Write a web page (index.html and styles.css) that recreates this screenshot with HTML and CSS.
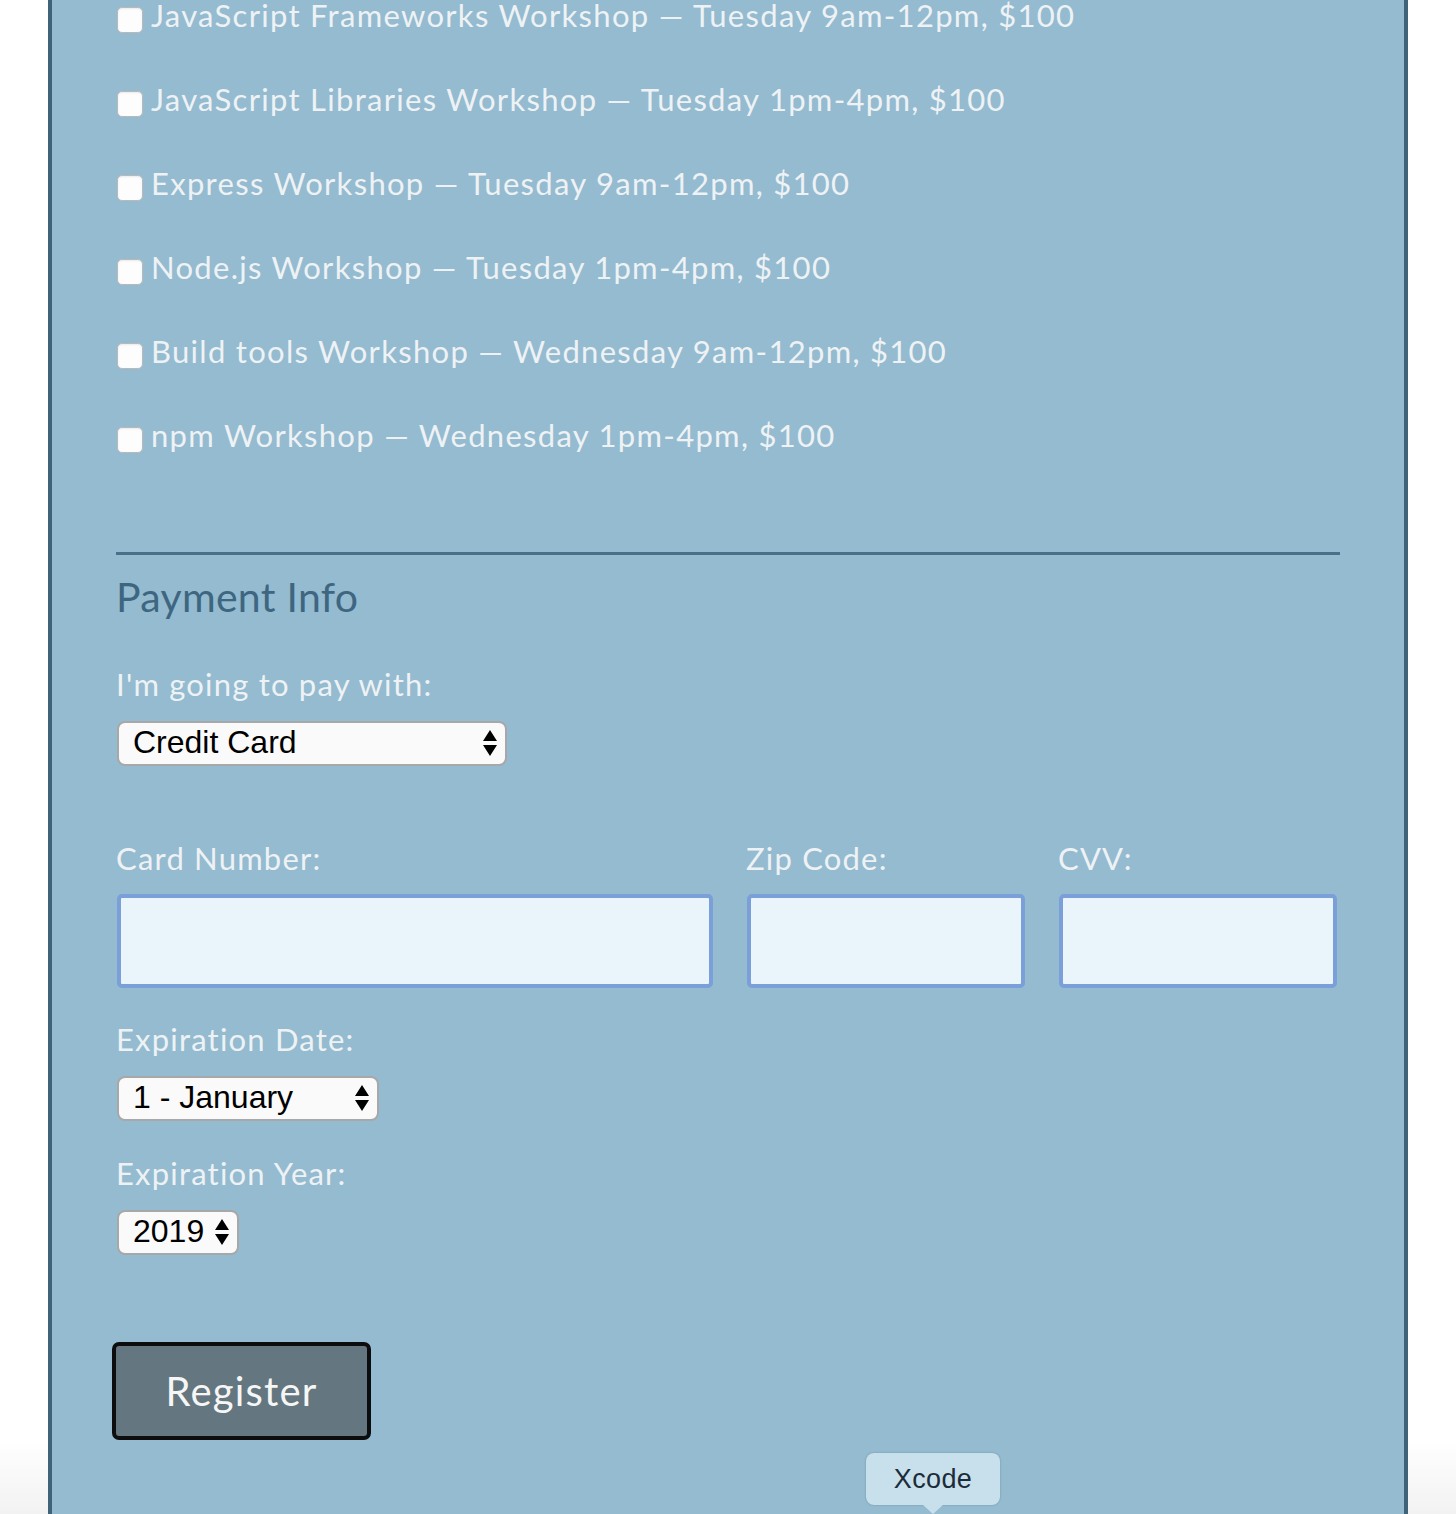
FILE: index.html
```html
<!DOCTYPE html>
<html lang="en">
<head>
<meta charset="utf-8">
<title>Registration</title>
<link rel="stylesheet" href="styles.css">
</head>
<body>
<div class="page">
  <fieldset class="activities">
    <label class="activity"><input type="checkbox" class="check"><span>JavaScript Frameworks Workshop — Tuesday 9am-12pm, $100</span></label>
    <label class="activity"><input type="checkbox" class="check"><span>JavaScript Libraries Workshop — Tuesday 1pm-4pm, $100</span></label>
    <label class="activity"><input type="checkbox" class="check"><span>Express Workshop — Tuesday 9am-12pm, $100</span></label>
    <label class="activity"><input type="checkbox" class="check"><span>Node.js Workshop — Tuesday 1pm-4pm, $100</span></label>
    <label class="activity"><input type="checkbox" class="check"><span>Build tools Workshop — Wednesday 9am-12pm, $100</span></label>
    <label class="activity"><input type="checkbox" class="check"><span>npm Workshop — Wednesday 1pm-4pm, $100</span></label>
  </fieldset>

  <fieldset class="payment">
    <h2 class="legend">Payment Info</h2>

    <label class="field-label pay-label" for="payment">I'm going to pay with:</label>
    <div class="select-wrap select-pay">
      <select id="payment" class="select"><option>Credit Card</option></select>
      <svg class="arrows" width="14" height="28" viewBox="0 0 14 28"><path d="M7 1 L14 12 L0 12 Z M0 16 L14 16 L7 27 Z" fill="#000"/></svg>
    </div>

    <div class="card-grid">
      <div class="col">
        <label class="field-label">Card Number:</label>
        <input type="text" class="text-input">
      </div>
      <div class="col">
        <label class="field-label">Zip Code:</label>
        <input type="text" class="text-input">
      </div>
      <div class="col">
        <label class="field-label">CVV:</label>
        <input type="text" class="text-input">
      </div>
    </div>

    <label class="field-label exp-label">Expiration Date:</label>
    <div class="select-wrap select-month">
      <select class="select"><option>1 - January</option></select>
      <svg class="arrows" width="14" height="28" viewBox="0 0 14 28"><path d="M7 1 L14 12 L0 12 Z M0 16 L14 16 L7 27 Z" fill="#000"/></svg>
    </div>

    <label class="field-label exp-label year-label">Expiration Year:</label>
    <div class="select-wrap select-year">
      <select class="select"><option>2019</option></select>
      <svg class="arrows" width="14" height="28" viewBox="0 0 14 28"><path d="M7 1 L14 12 L0 12 Z M0 16 L14 16 L7 27 Z" fill="#000"/></svg>
    </div>
  </fieldset>

  <button type="submit" class="register">Register</button>
</div>

<div class="tooltip">Xcode</div>
</body>
</html>
```

FILE: styles.css
```css
html, body {
  margin: 0;
  padding: 0;
}
body {
  position: relative;
  height: 1514px;
  overflow: hidden;
  background: linear-gradient(to bottom, #ffffff 0, #ffffff 1440px, #f2f2f2 1514px);
  font-family: "Lato", "Open Sans", sans-serif;
}
.page {
  display: flow-root;
  margin: 0 48px;
  height: 1514px;
  box-sizing: border-box;
  background: #94bbd0;
  border-left: 4px solid #3f6379;
  border-right: 4px solid #3f6379;
  padding: 0 64px;
}
fieldset {
  border: 0;
  margin: 0;
  padding: 0;
  min-width: 0;
}
.activities {
  margin-top: -27px;
  padding-bottom: 75px;
  border-bottom: 3px solid #4a7089;
}
.activity {
  display: flex;
  align-items: center;
  height: 84px;
  font-size: 31px;
  letter-spacing: 1.3px;
  color: #eef2f4;
}
.check {
  appearance: none;
  -webkit-appearance: none;
  box-sizing: border-box;
  width: 26px;
  height: 26px;
  margin: 10px 8px 0 1px;
  background: #fdfdfd;
  border: 1px solid #b9b9b9;
  border-radius: 5px;
  box-shadow: inset 0 1px 2px rgba(0,0,0,0.08);
  flex: none;
}
.legend {
  margin: 18px 0 0;
  font-size: 41px;
  line-height: 48px;
  font-weight: 400;
  letter-spacing: 0.3px;
  color: #3e6680;
}
.field-label {
  display: block;
  font-size: 31px;
  line-height: 37px;
  letter-spacing: 1.2px;
  color: #eef2f4;
  margin-bottom: 18px;
}
.pay-label {
  margin-top: 45px;
}
.exp-label {
  margin-top: 33px;
}
.year-label {
  margin-top: 34px;
}
.select-wrap {
  position: relative;
  margin-left: 1px;
  height: 45px;
}
.select-pay { width: 390px; }
.select-month { width: 262px; }
.select-year { width: 122px; }
.select {
  appearance: none;
  -webkit-appearance: none;
  box-sizing: border-box;
  width: 100%;
  height: 45px;
  margin: 0;
  padding: 0 0 4px 14px;
  background: #fafafa;
  border: 2px solid #a8a8a8;
  border-radius: 8px;
  font-family: "Liberation Sans", Arial, sans-serif;
  font-size: 32px;
  color: #000;
}
.arrows {
  position: absolute;
  right: 10px;
  top: 8px;
  pointer-events: none;
}
.card-grid {
  display: grid;
  grid-template-columns: 598px 280px 280px;
  column-gap: 32px;
  margin-top: 74px;
}
.col .field-label {
  margin-bottom: 17px;
}
.text-input {
  display: block;
  box-sizing: border-box;
  width: calc(100% - 2px);
  height: 94px;
  margin: 0 0 0 1px;
  background: #eaf5fb;
  border: 4px solid #7b9fd8;
  border-radius: 5px;
}
.register {
  display: block;
  margin: 87px 0 0 -4px;
  width: 259px;
  height: 98px;
  box-sizing: border-box;
  background: #64767f;
  border: 4px solid #0d0d0d;
  border-radius: 7px;
  color: #f6f6f6;
  font-family: "Lato", "Open Sans", sans-serif;
  font-size: 40px;
  letter-spacing: 1.2px;
  padding: 0;
}
.tooltip {
  position: absolute;
  left: 866px;
  top: 1453px;
  width: 134px;
  height: 52px;
  box-sizing: border-box;
  background: #c8e0ec;
  border-radius: 8px;
  box-shadow: 0 0 2px rgba(0,0,0,0.25);
  font-family: "Liberation Sans", Arial, sans-serif;
  font-size: 27px;
  letter-spacing: 0.4px;
  color: #1c2c38;
  text-align: center;
  line-height: 52px;
}
.tooltip::after {
  content: "";
  position: absolute;
  left: 56px;
  bottom: -9px;
  border-left: 11px solid transparent;
  border-right: 11px solid transparent;
  border-top: 10px solid #c8e0ec;
}
```
